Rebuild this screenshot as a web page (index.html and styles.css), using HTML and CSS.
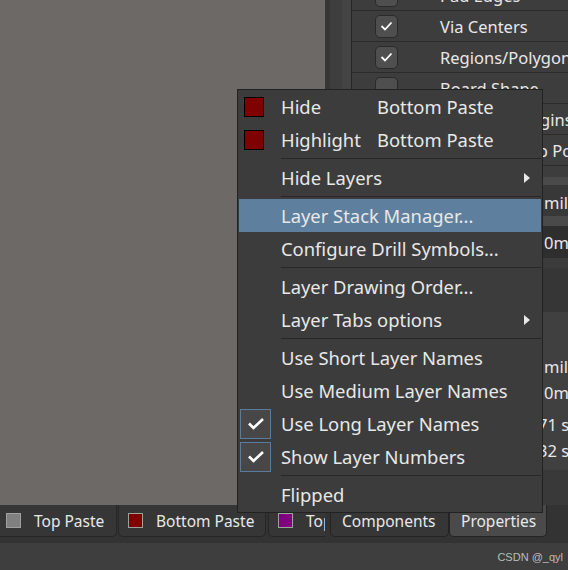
FILE: index.html
```html
<!DOCTYPE html>
<html>
<head>
<meta charset="utf-8">
<link rel="stylesheet" href="styles.css">
</head>
<body>
<div class="top">
  <div class="canvas"></div>
  <div class="strip"><div class="st1"></div><div class="st2"></div><div class="st3"></div><div class="st4"></div></div>
  <div class="panel">
    <div class="snaps">
      <div class="snap"><span class="cb"></span><span>Pad Edges</span></div>
      <div class="snap"><span class="cb"><svg width="13" height="10" viewBox="0 0 13 10"><polyline points="1.5,5 5,8.5 11.5,1.5" fill="none" stroke="#fff" stroke-width="1.8"/></svg></span><span>Via Centers</span></div>
      <div class="snap"><span class="cb"><svg width="13" height="10" viewBox="0 0 13 10"><polyline points="1.5,5 5,8.5 11.5,1.5" fill="none" stroke="#fff" stroke-width="1.8"/></svg></span><span>Regions/Polygons/Fills</span></div>
      <div class="snap"><span class="cb"></span><span>Board Shape</span></div>
      <div class="snap"><span class="cb"></span><span>Footprint Origins</span></div>
      <div class="snap"><span class="cb"></span><span>3D Body Snap Points</span></div>
    </div>
    <div class="band b1"></div>
    <div class="band b2"></div>
    <div class="band b3"><span class="val">mil</span></div>
    <div class="band b4"></div>
    <div class="band b5"><span class="val">0mm</span></div>
    <div class="band b6"></div>
    <div class="band b7"></div>
    <div class="band b8">
      <div class="vline">mil</div>
      <div class="vline">0mm</div>
      <div class="vline gap shift">71 sq.mm</div>
      <div class="vline shift">32 sq.mm</div>
    </div>
    <div class="band b9"></div>
  </div>
</div>
<div class="tabbar">
  <div class="layertabs">
    <div class="ltab t1"><span class="sw gray"></span>Top Paste</div>
    <div class="ltab t2"><span class="sw red"></span>Bottom Paste</div>
    <div class="ltab t3"><span class="sw purple"></span>Top Overlay</div>
  </div>
  <div class="ptabs">
    <div class="ptab comp">Components</div>
    <div class="ptab prop">Properties</div>
  </div>
</div>
<div class="status"><span>CSDN @_qyl</span></div>

<div class="menu">
  <div class="item"><span class="ic"><span class="swatch"></span></span><span class="lab w">Hide</span><span class="lab">Bottom Paste</span></div>
  <div class="item"><span class="ic"><span class="swatch"></span></span><span class="lab w">Highlight</span><span class="lab">Bottom Paste</span></div>
  <div class="sep"></div>
  <div class="item"><span class="ic"></span><span class="lab grow">Hide Layers</span><span class="arrow"></span></div>
  <div class="sep"></div>
  <div class="item active"><span class="ic"></span><span class="lab">Layer Stack Manager...</span></div>
  <div class="item"><span class="ic"></span><span class="lab">Configure Drill Symbols...</span></div>
  <div class="sep"></div>
  <div class="item"><span class="ic"></span><span class="lab">Layer Drawing Order...</span></div>
  <div class="item"><span class="ic"></span><span class="lab grow">Layer Tabs options</span><span class="arrow"></span></div>
  <div class="sep"></div>
  <div class="item"><span class="ic"></span><span class="lab">Use Short Layer Names</span></div>
  <div class="item"><span class="ic"></span><span class="lab">Use Medium Layer Names</span></div>
  <div class="item"><span class="ic"><span class="mcb"><svg width="18" height="13" viewBox="0 0 18 13"><polyline points="2,6.5 6.5,11 16,2" fill="none" stroke="#fff" stroke-width="2.6"/></svg></span></span><span class="lab">Use Long Layer Names</span></div>
  <div class="item"><span class="ic"><span class="mcb"><svg width="18" height="13" viewBox="0 0 18 13"><polyline points="2,6.5 6.5,11 16,2" fill="none" stroke="#fff" stroke-width="2.6"/></svg></span></span><span class="lab">Show Layer Numbers</span></div>
  <div class="sep"></div>
  <div class="item"><span class="ic"></span><span class="lab">Flipped</span></div>
</div>
</body>
</html>
```
FILE: styles.css
```css
* { box-sizing: border-box; }
html, body { margin: 0; padding: 0; }
body {
  width: 568px;
  height: 570px;
  overflow: hidden;
  position: relative;
  background: #3e3e3e;
  color: #e8e8e8;
  font-family: "Noto Sans", "Open Sans", sans-serif;
}

.top {
  display: grid;
  grid-template-columns: 325px 27px 216px;
  height: 505px;
}
.canvas { background: #6d6967; }
.strip {
  display: grid;
  grid-template-columns: 5px 12px 9px 1px;
}
.st1 { background: #363636; }
.st2 { background: #3e3e3e; }
.st3 { background: #444444; }
.st4 { background: #262626; }

.panel {
  background: #3d3d3d;
  overflow: hidden;
  display: flex;
  flex-direction: column;
  font-size: 16.5px;
  white-space: nowrap;
}
.snaps { margin-top: -20px; }
.snap {
  height: 31px;
  flex-shrink: 0;
  border-bottom: 1px solid #2b2b2b;
  display: flex;
  align-items: center;
}
.cb {
  width: 23px;
  height: 23px;
  margin-left: 23px;
  margin-right: 42px;
  border-radius: 5px;
  background: #4f4f4f;
  border: 1px solid #2a2a2a;
  display: flex;
  align-items: center;
  justify-content: center;
  flex-shrink: 0;
}
.band { flex-shrink: 0; display: flex; align-items: center; }
.val { padding-left: 192px; }
.b1 { height: 11px; background: #3d3d3d; }
.b2 { height: 8px; background: #4a4a4a; }
.b3 { height: 31px; background: #383838; padding-top: 6px; align-items: flex-start; }
.b4 { height: 10px; background: #4a4a4a; }
.b5 { height: 32px; background: #2e2e2e; }
.b6 { height: 10px; background: #3b3b3b; }
.b7 { height: 44px; background: #363636; }
.b8 {
  height: 158px;
  background: #404040;
  flex-direction: column;
  align-items: stretch;
  padding-top: 42px;
}
.b9 { flex: 1; background: #393939; }
.vline {
  height: 26px;
  line-height: 26px;
  padding-left: 192px;
}
.vline.shift { padding-left: 186px; }
.vline.gap { margin-top: 6px; }

.tabbar {
  height: 38px;
  background: #333333;
  display: flex;
  font-size: 15.5px;
}
.layertabs {
  width: 325px;
  flex-shrink: 0;
  display: flex;
  overflow: hidden;
}
.ltab {
  height: 32px;
  display: flex;
  align-items: center;
  flex-shrink: 0;
  background: #363636;
  border: 1px solid #262626;
  border-top: none;
  border-radius: 0 0 5px 5px;
  padding-left: 9px;
  margin-right: 1px;
  white-space: nowrap;
}
.t1 { width: 121px; margin-left: -4px; }
.t2 { width: 148px; margin-right: 2px; }
.t3 { width: 120px; }
.sw {
  width: 15px;
  height: 15px;
  border: 1px solid #a0a0a0;
  margin-right: 13px;
  flex-shrink: 0;
}
.gray { background: #808080; }
.red { background: #800000; }
.purple { background: #800080; }

.ptabs { display: flex; margin-left: 5px; }
.ptab {
  height: 32px;
  display: flex;
  align-items: center;
  border: 1px solid #242424;
  border-top: none;
  border-radius: 0 0 5px 5px;
  padding-left: 11px;
  white-space: nowrap;
}
.comp { width: 119px; background: #363636; }
.prop { width: 98px; background: #4a4a4a; }

.status {
  height: 27px;
  display: flex;
  justify-content: flex-end;
  align-items: center;
  padding-right: 5px;
  font-family: "Liberation Sans", Arial, sans-serif;
  font-size: 11px;
  color: #bcbcbc;
}

.menu {
  position: absolute;
  left: 237px;
  top: 89px;
  width: 306px;
  background: #3c3c3c;
  border: 1px solid #222222;
  padding: 0 1px 1px 1px;
  font-size: 18.4px;
  white-space: nowrap;
}
.item {
  height: 33px;
  display: flex;
  align-items: center;
}
.item.active { background: #5f7f9f; }
.ic {
  width: 42px;
  height: 33px;
  flex-shrink: 0;
  display: flex;
  align-items: center;
}
.swatch {
  width: 20px;
  height: 20px;
  margin-left: 5px;
  background: #800000;
  border: 1px solid #000;
}
.mcb {
  width: 31px;
  height: 30px;
  margin-left: 1px;
  background: #474747;
  border: 1px solid #5a7b9b;
  display: flex;
  align-items: center;
  justify-content: center;
}
.lab.w { width: 96px; }
.lab.grow { flex: 1; }
.arrow {
  width: 0;
  height: 0;
  border-top: 5.5px solid transparent;
  border-bottom: 5.5px solid transparent;
  border-left: 6px solid #e8e8e8;
  margin-right: 11px;
}
.sep {
  height: 1px;
  margin: 2px 0 2px 42px;
  background: #272727;
}
```
